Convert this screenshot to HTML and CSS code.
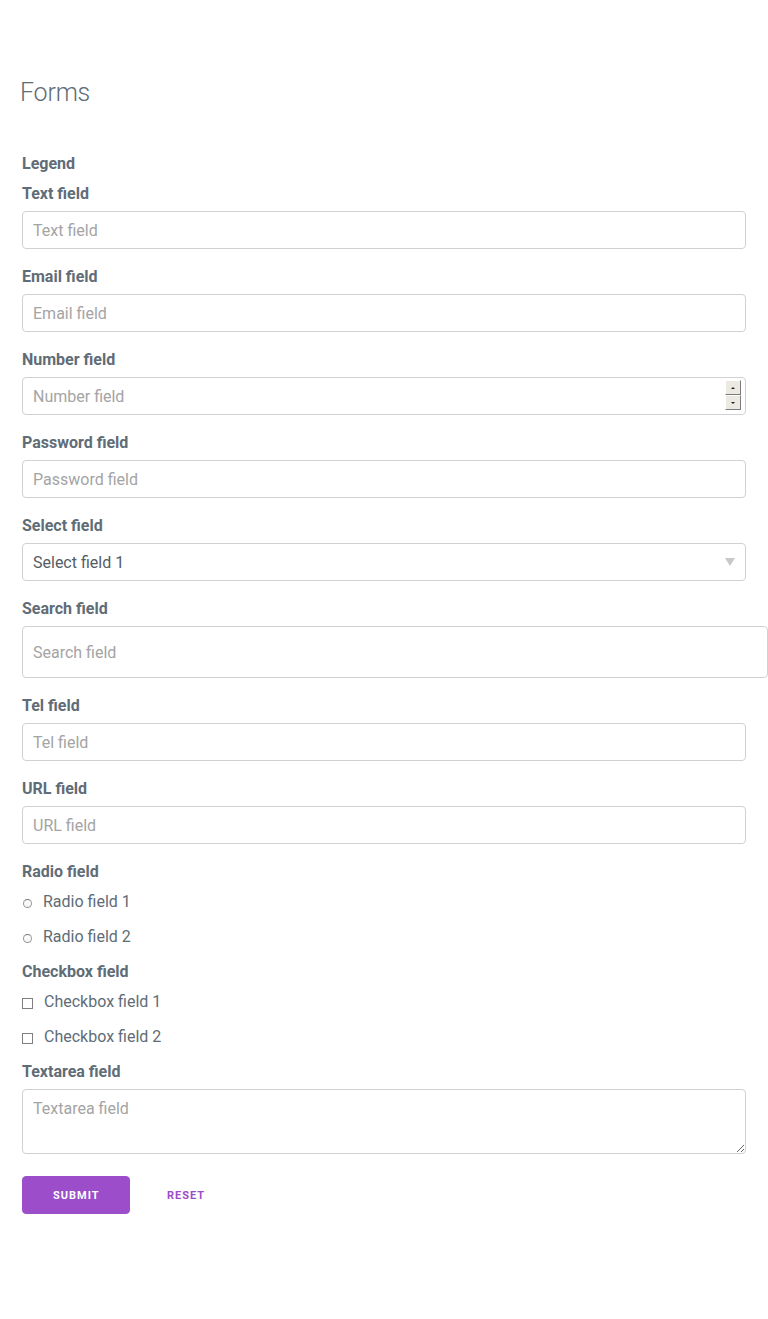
FILE: index.html
```html
<!DOCTYPE html>
<html>
<head>
<meta charset="utf-8">
<link rel="stylesheet" href="styles.css">
</head>
<body>
<main class="page">
  <h1 class="title">Forms</h1>
  <form class="form">
    <div class="legend">Legend</div>

    <label class="label">Text field</label>
    <input class="field" type="text" placeholder="Text field">

    <label class="label">Email field</label>
    <input class="field" type="text" placeholder="Email field">

    <label class="label">Number field</label>
    <div class="number-wrap">
      <input class="field" type="text" placeholder="Number field">
      <div class="spinner">
        <span class="spin-btn"><span class="tri-up"></span></span>
        <span class="spin-btn"><span class="tri-down"></span></span>
      </div>
    </div>

    <label class="label">Password field</label>
    <input class="field" type="password" placeholder="Password field">

    <label class="label">Select field</label>
    <div class="select">
      <span class="select-text">Select field 1</span>
      <span class="select-arrow"></span>
    </div>

    <label class="label">Search field</label>
    <input class="field search" type="text" placeholder="Search field">

    <label class="label">Tel field</label>
    <input class="field" type="text" placeholder="Tel field">

    <label class="label">URL field</label>
    <input class="field" type="text" placeholder="URL field">

    <div class="label group-label">Radio field</div>
    <div class="option"><span class="radio"></span><span class="opt-text">Radio field 1</span></div>
    <div class="option"><span class="radio"></span><span class="opt-text">Radio field 2</span></div>

    <div class="label group-label">Checkbox field</div>
    <div class="option"><span class="check"></span><span class="opt-text check-text">Checkbox field 1</span></div>
    <div class="option"><span class="check"></span><span class="opt-text check-text">Checkbox field 2</span></div>

    <label class="label">Textarea field</label>
    <textarea class="field area" placeholder="Textarea field"></textarea>

    <div class="actions">
      <button type="button" class="btn btn-primary">Submit</button>
      <button type="button" class="btn btn-clear">Reset</button>
    </div>
  </form>
</main>
</body>
</html>
```

FILE: styles.css
```css
* { box-sizing: border-box; }
html, body { margin: 0; padding: 0; background: #fff; }
body {
  font-family: Roboto, "Liberation Sans", sans-serif;
  color: #606c76;
  font-size: 16px;
}
.page { padding: 78px 0 0 22px; width: 768px; }
.title {
  margin: 0 0 46px -2px;
  font-size: 25px;
  font-weight: 300;
  line-height: 30px;
  letter-spacing: -0.2px;
  color: #606c76;
}
.form { display: flex; flex-direction: column; align-items: flex-start; }
.legend, .label {
  font-weight: 700;
  font-size: 16px;
  line-height: 20px;
  display: block;
}
.legend { margin-bottom: 10px; }
.label { margin-bottom: 7px; }
.group-label { margin-bottom: 10px; }
.field {
  display: block;
  width: 724px;
  height: 38px;
  margin: 0 0 18px 0;
  padding: 6px 10px;
  border: 1px solid #d1d1d1;
  border-radius: 4px;
  background: #fff;
  font-family: Roboto, "Liberation Sans", sans-serif;
  font-size: 16px;
  color: #606c76;
  outline: none;
  box-shadow: none;
}
.field::placeholder { color: #a4a4a4; opacity: 1; }
.search { width: 746px; height: 52px; }
.number-wrap { position: relative; width: 724px; }
.spinner {
  position: absolute;
  top: 3px;
  right: 5px;
  width: 16px;
  display: flex;
  flex-direction: column;
}
.spin-btn {
  height: 15px;
  background: #ece9e3;
  border-top: 1px solid #fff;
  border-left: 1px solid #fff;
  border-right: 1px solid #7b7b7b;
  border-bottom: 1px solid #7b7b7b;
  display: flex;
  align-items: center;
  justify-content: center;
}
.tri-up, .tri-down { width: 0; height: 0; border-left: 2px solid transparent; border-right: 2px solid transparent; }
.tri-up { border-bottom: 2px solid #222; }
.tri-down { border-top: 2px solid #222; }
.select {
  width: 724px;
  height: 38px;
  margin-bottom: 18px;
  padding: 0 10px;
  border: 1px solid #d1d1d1;
  border-radius: 4px;
  display: flex;
  align-items: center;
  justify-content: space-between;
}
.select-text { color: #555c63; font-size: 16px; }
.select-arrow {
  width: 0; height: 0;
  border-left: 5px solid transparent;
  border-right: 5px solid transparent;
  border-top: 8px solid #c8c8c8;
  margin-right: 0;
}
.option {
  display: flex;
  align-items: center;
  height: 20px;
  margin-bottom: 15px;
}
.radio {
  width: 9px; height: 9px;
  border-radius: 50%;
  border: 1px solid #999;
  border-top-color: #777;
  background: linear-gradient(#fff, #f3f3f3);
  margin: 3px 11px 0 1px;
}
.check {
  width: 11px; height: 11px;
  border: 1px solid #7f7f7f;
  background: #fff;
  margin: 2px 11px 0 0;
}
.opt-text { font-size: 16px; color: #606c76; line-height: 20px; }
.area { height: 65px; padding-top: 9px; margin-bottom: 22px; resize: vertical; }
.actions { display: flex; align-items: center; }
.btn {
  height: 38px;
  padding: 0 30px;
  border-radius: 4px;
  font-family: Roboto, "Liberation Sans", sans-serif;
  font-size: 11px;
  font-weight: 700;
  letter-spacing: 1px;
  text-transform: uppercase;
  cursor: pointer;
}
.btn-primary {
  width: 108px;
  background: #9b4dca;
  border: 1px solid #9b4dca;
  color: #fff;
}
.btn-clear {
  background: transparent;
  border: 1px solid transparent;
  color: #9b4dca;
  margin-left: 6px;
}
```
